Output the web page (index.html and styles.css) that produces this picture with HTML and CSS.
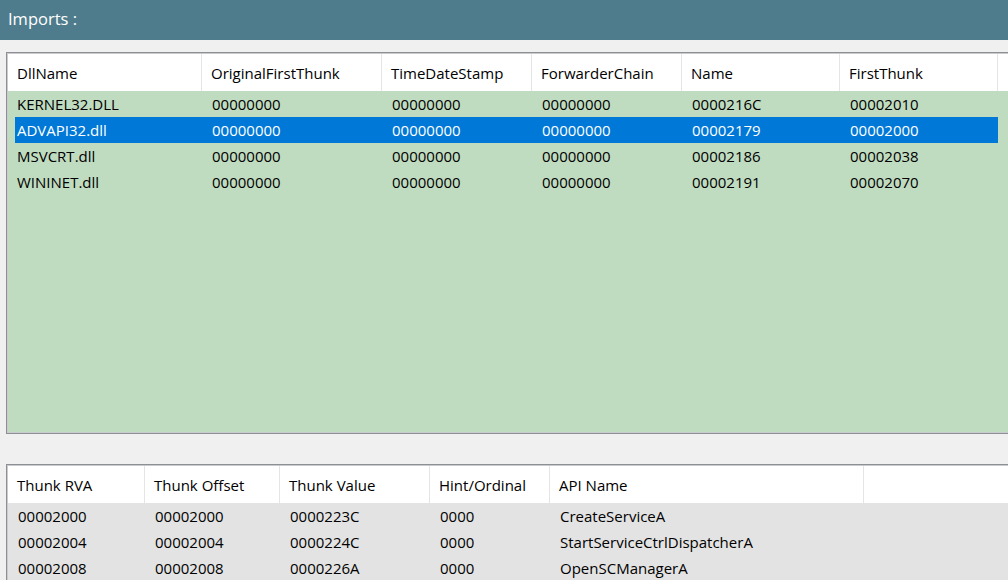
FILE: index.html
```html
<!DOCTYPE html>
<html>
<head>
<meta charset="utf-8">
<link rel="stylesheet" href="styles.css">
</head>
<body>
<div class="title">Imports :</div>
<div class="list list-top">
  <div class="head">
    <div class="hc">DllName</div>
    <div class="hc">OriginalFirstThunk</div>
    <div class="hc">TimeDateStamp</div>
    <div class="hc">ForwarderChain</div>
    <div class="hc">Name</div>
    <div class="hc">FirstThunk</div>
    <div class="hc last"></div>
  </div>
  <div class="row">
    <div class="c">KERNEL32.DLL</div><div class="c">00000000</div><div class="c">00000000</div><div class="c">00000000</div><div class="c">0000216C</div><div class="c">00002010</div>
  </div>
  <div class="row sel">
    <div class="c">ADVAPI32.dll</div><div class="c">00000000</div><div class="c">00000000</div><div class="c">00000000</div><div class="c">00002179</div><div class="c">00002000</div>
  </div>
  <div class="row">
    <div class="c">MSVCRT.dll</div><div class="c">00000000</div><div class="c">00000000</div><div class="c">00000000</div><div class="c">00002186</div><div class="c">00002038</div>
  </div>
  <div class="row">
    <div class="c">WININET.dll</div><div class="c">00000000</div><div class="c">00000000</div><div class="c">00000000</div><div class="c">00002191</div><div class="c">00002070</div>
  </div>
</div>
<div class="list list-bottom">
  <div class="head">
    <div class="hc">Thunk RVA</div>
    <div class="hc">Thunk Offset</div>
    <div class="hc">Thunk Value</div>
    <div class="hc">Hint/Ordinal</div>
    <div class="hc">API Name</div>
    <div class="hc last"></div>
  </div>
  <div class="row">
    <div class="c">00002000</div><div class="c">00002000</div><div class="c">0000223C</div><div class="c">0000</div><div class="c">CreateServiceA</div>
  </div>
  <div class="row">
    <div class="c">00002004</div><div class="c">00002004</div><div class="c">0000224C</div><div class="c">0000</div><div class="c">StartServiceCtrlDispatcherA</div>
  </div>
  <div class="row">
    <div class="c">00002008</div><div class="c">00002008</div><div class="c">0000226A</div><div class="c">0000</div><div class="c">OpenSCManagerA</div>
  </div>
</div>
</body>
</html>
```
FILE: styles.css
```css
html, body {
  margin: 0;
  padding: 0;
}
body {
  width: 1008px;
  height: 580px;
  overflow: hidden;
  background: #f0f0f0;
  font-family: "Open Sans", "Noto Sans", sans-serif;
  font-size: 15px;
  color: #000;
}
.title {
  height: 40px;
  background: #4f7c8c;
  color: #fff;
  font-size: 16.5px;
  line-height: 38px;
  padding-left: 8px;
  box-sizing: border-box;
}
.list {
  box-sizing: border-box;
  border: 1px solid #8c8f94;
  box-shadow: inset 0 0 0 1px #c9cbcd;
  padding: 1px;
}
.list-top {
  margin: 12px 0 0 6px;
  width: 1010px;
  height: 382px;
  background: #c0dcc0;
}
.list-bottom {
  margin: 30px 0 0 6px;
  width: 1010px;
  height: 130px;
  background: #e3e3e3;
}
.head {
  display: flex;
  background: #fff;
}
.list-top .head { height: 37px; }
.list-bottom .head { height: 37px; }
.hc {
  box-sizing: border-box;
  flex: none;
  border-right: 1px solid #e5e5e5;
  padding-left: 9px;
  display: flex;
  align-items: center;
  white-space: nowrap;
}
.hc.last { flex: 1; border-right: none; }
.list-top .hc:nth-child(1) { width: 194px; }
.list-top .hc:nth-child(2) { width: 180px; }
.list-top .hc:nth-child(3) { width: 150px; }
.list-top .hc:nth-child(4) { width: 150px; }
.list-top .hc:nth-child(5) { width: 158px; }
.list-top .hc:nth-child(6) { width: 158px; }
.list-bottom .hc:nth-child(1) { width: 137px; }
.list-bottom .hc:nth-child(2) { width: 135px; }
.list-bottom .hc:nth-child(3) { width: 150px; }
.list-bottom .hc:nth-child(4) { width: 120px; }
.list-bottom .hc:nth-child(5) { width: 314px; }
.row {
  display: flex;
  height: 26px;
  align-items: center;
  white-space: nowrap;
}
.list-top .row {
  margin-left: 7px;
  width: 983px;
}
.list-top .row .c:nth-child(1) { width: 187px; padding-left: 2px; }
.list-top .row .c:nth-child(2) { width: 180px; }
.list-top .row .c:nth-child(3) { width: 150px; }
.list-top .row .c:nth-child(4) { width: 150px; }
.list-top .row .c:nth-child(5) { width: 158px; }
.list-top .row .c:nth-child(6) { width: 158px; }
.list-bottom .row .c:nth-child(1) { width: 137px; }
.list-bottom .row .c:nth-child(2) { width: 135px; }
.list-bottom .row .c:nth-child(3) { width: 150px; }
.list-bottom .row .c:nth-child(4) { width: 120px; }
.list-bottom .row .c:nth-child(5) { width: 314px; }
.c {
  box-sizing: border-box;
  flex: none;
  padding-left: 10px;
}
.row.sel {
  background: #0078d7;
  color: #fff;
}
```
